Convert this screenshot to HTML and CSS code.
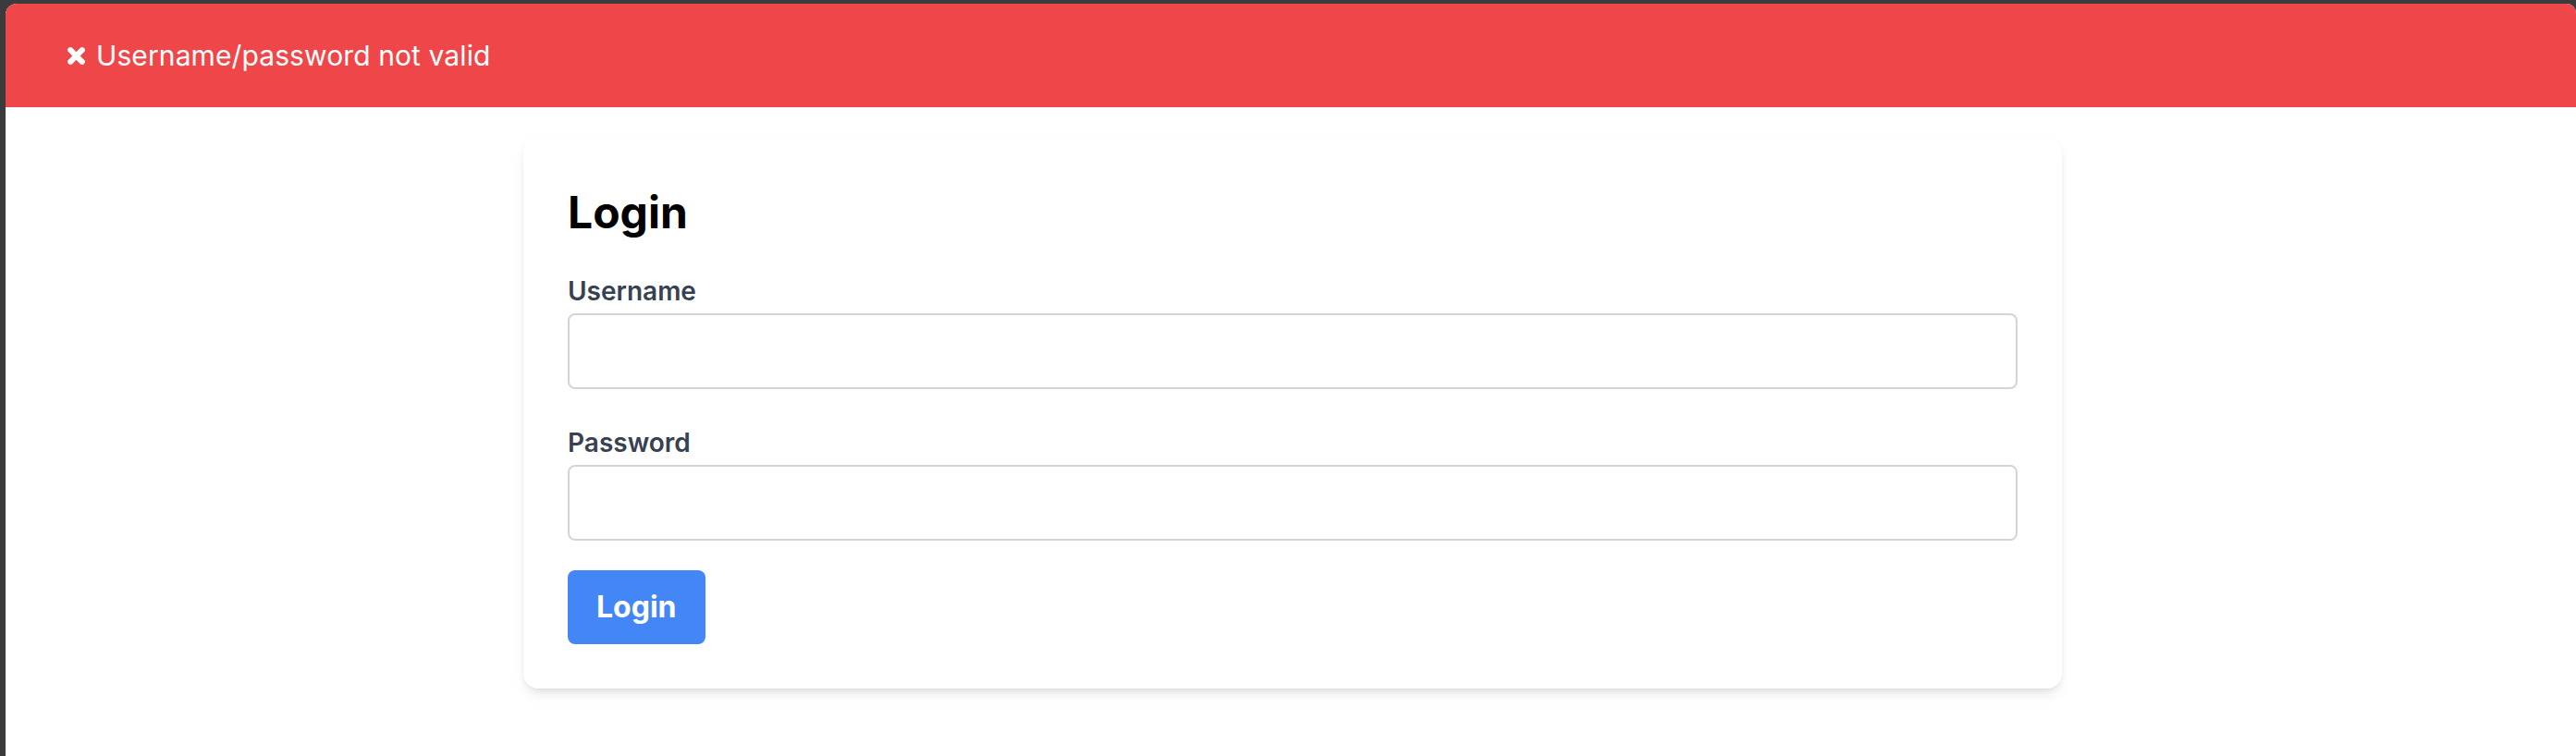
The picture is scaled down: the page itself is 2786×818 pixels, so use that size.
FILE: index.html
```html
<!DOCTYPE html>
<html lang="en">
<head>
<meta charset="utf-8">
<title>Login</title>
<link rel="stylesheet" href="styles.css">
</head>
<body>
<div class="window">
  <div class="alert">
    <svg class="alert-icon" viewBox="0 0 20 20" aria-hidden="true">
      <path d="M4 4 L16 16 M16 4 L4 16" />
    </svg>
    <span class="alert-text">Username/password not valid</span>
  </div>
  <main class="main">
    <form class="card">
      <h1 class="card-title">Login</h1>
      <div class="field">
        <label class="field-label" for="username">Username</label>
        <input class="field-input" id="username" type="text">
      </div>
      <div class="field">
        <label class="field-label" for="password">Password</label>
        <input class="field-input" id="password" type="password">
      </div>
      <button class="btn" type="button">Login</button>
    </form>
  </main>
</div>
</body>
</html>
```

FILE: styles.css
```css
html, body {
  margin: 0;
  padding: 0;
  height: 100%;
}

body {
  background: #3b3b3b;
  font-family: Inter, "Noto Sans", "Liberation Sans", sans-serif;
  overflow: hidden;
}

.window {
  margin: 4px 0 0 6px;
  min-height: calc(100vh - 4px);
  background: #ffffff;
  border-radius: 12px 10px 0 0;
  overflow: hidden;
}

.alert {
  height: 112px;
  background: #ef4649;
  display: flex;
  align-items: center;
  padding-left: 66px;
  gap: 11px;
  color: #ffffff;
}

.alert-icon {
  width: 21px;
  height: 21px;
  flex: none;
  fill: none;
  stroke: #ffffff;
  stroke-width: 5.8;
  stroke-linecap: round;
}

.alert-text {
  font-size: 30px;
  line-height: 40px;
  font-weight: 400;
  letter-spacing: 0.1px;
}

.main {
  padding: 32px 0 0 4px;
}

.card {
  width: 1664px;
  box-sizing: border-box;
  margin: 0 auto;
  padding: 48px;
  background: #ffffff;
  border-radius: 16px;
  box-shadow: 0 8px 14px -3px rgba(0, 0, 0, 0.1), 0 4px 8px -4px rgba(0, 0, 0, 0.08), 0 0 2px rgba(0, 0, 0, 0.03);
}

.card-title {
  margin: 0 0 31px;
  font-size: 48px;
  line-height: 68px;
  font-weight: 700;
  color: #000000;
}

.field {
  margin-bottom: 38px;
}

.field + .field {
  margin-bottom: 32px;
}

.field-label {
  display: block;
  margin-bottom: 4px;
  font-size: 28px;
  line-height: 40px;
  font-weight: 600;
  color: #374151;
}

.field-input {
  display: block;
  width: 100%;
  height: 82px;
  box-sizing: border-box;
  margin: 0;
  padding: 0 24px;
  border: 2px solid #d1d5db;
  border-radius: 8px;
  background: #ffffff;
  font-family: inherit;
  font-size: 32px;
  outline: none;
}

.btn {
  display: block;
  margin: 0;
  padding: 16px 31px;
  border: 0;
  border-radius: 8px;
  background: #4287f5;
  color: #ffffff;
  font-family: inherit;
  font-size: 32px;
  line-height: 48px;
  font-weight: 700;
  cursor: pointer;
}
```
